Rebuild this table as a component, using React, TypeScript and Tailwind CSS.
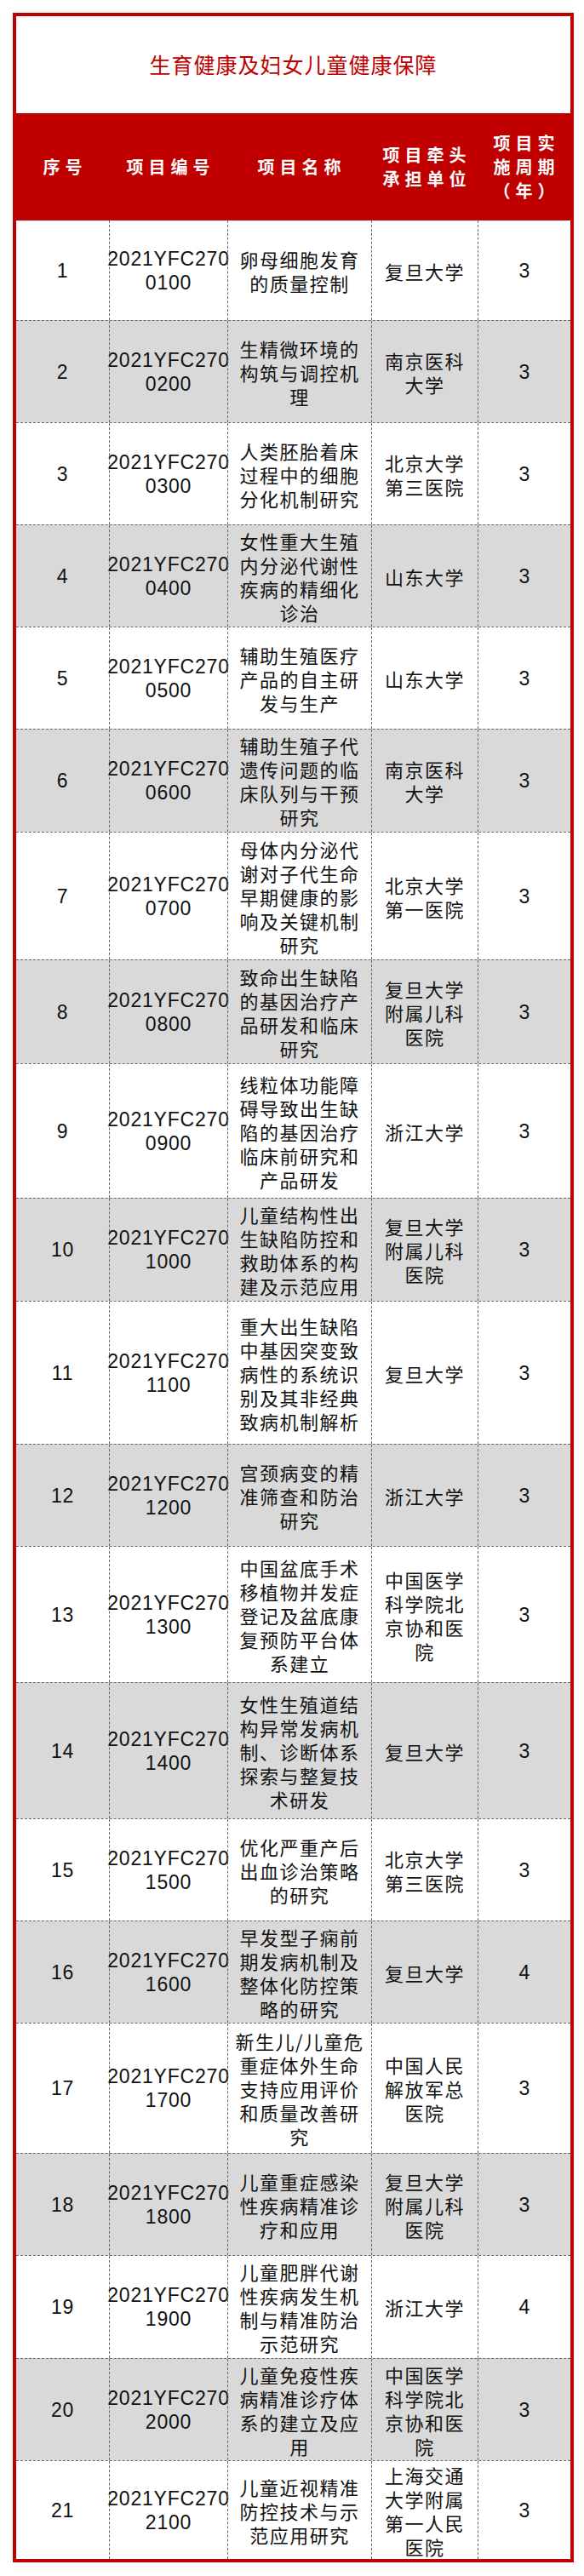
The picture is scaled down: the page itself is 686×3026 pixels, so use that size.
import React from 'react';

interface Project {
  no: number;
  code: string;
  name: string[];
  unit: string[];
  years: number;
  h: string;
}

// 项目数据：名称和单位按原图的换行拆好
const projects: Project[] = [
  { no: 1, code: '0100', name: ['卵母细胞发育', '的质量控制'], unit: ['复旦大学'], years: 3, h: 'h-[117px]' },
  { no: 2, code: '0200', name: ['生精微环境的', '构筑与调控机', '理'], unit: ['南京医科', '大学'], years: 3, h: 'h-[120px]' },
  { no: 3, code: '0300', name: ['人类胚胎着床', '过程中的细胞', '分化机制研究'], unit: ['北京大学', '第三医院'], years: 3, h: 'h-[120px]' },
  { no: 4, code: '0400', name: ['女性重大生殖', '内分泌代谢性', '疾病的精细化', '诊治'], unit: ['山东大学'], years: 3, h: 'h-[120px]' },
  { no: 5, code: '0500', name: ['辅助生殖医疗', '产品的自主研', '发与生产'], unit: ['山东大学'], years: 3, h: 'h-[120px]' },
  { no: 6, code: '0600', name: ['辅助生殖子代', '遗传问题的临', '床队列与干预', '研究'], unit: ['南京医科', '大学'], years: 3, h: 'h-[121px]' },
  { no: 7, code: '0700', name: ['母体内分泌代', '谢对子代生命', '早期健康的影', '响及关键机制', '研究'], unit: ['北京大学', '第一医院'], years: 3, h: 'h-[150px]' },
  { no: 8, code: '0800', name: ['致命出生缺陷', '的基因治疗产', '品研发和临床', '研究'], unit: ['复旦大学', '附属儿科', '医院'], years: 3, h: 'h-[122px]' },
  { no: 9, code: '0900', name: ['线粒体功能障', '碍导致出生缺', '陷的基因治疗', '临床前研究和', '产品研发'], unit: ['浙江大学'], years: 3, h: 'h-[158px]' },
  { no: 10, code: '1000', name: ['儿童结构性出', '生缺陷防控和', '救助体系的构', '建及示范应用'], unit: ['复旦大学', '附属儿科', '医院'], years: 3, h: 'h-[121px]' },
  { no: 11, code: '1100', name: ['重大出生缺陷', '中基因突变致', '病性的系统识', '别及其非经典', '致病机制解析'], unit: ['复旦大学'], years: 3, h: 'h-[168px]' },
  { no: 12, code: '1200', name: ['宫颈病变的精', '准筛查和防治', '研究'], unit: ['浙江大学'], years: 3, h: 'h-[120px]' },
  { no: 13, code: '1300', name: ['中国盆底手术', '移植物并发症', '登记及盆底康', '复预防平台体', '系建立'], unit: ['中国医学', '科学院北', '京协和医', '院'], years: 3, h: 'h-[160px]' },
  { no: 14, code: '1400', name: ['女性生殖道结', '构异常发病机', '制、诊断体系', '探索与整复技', '术研发'], unit: ['复旦大学'], years: 3, h: 'h-[160px]' },
  { no: 15, code: '1500', name: ['优化严重产后', '出血诊治策略', '的研究'], unit: ['北京大学', '第三医院'], years: 3, h: 'h-[120px]' },
  { no: 16, code: '1600', name: ['早发型子痫前', '期发病机制及', '整体化防控策', '略的研究'], unit: ['复旦大学'], years: 4, h: 'h-[120px]' },
  { no: 17, code: '1700', name: ['新生儿/儿童危', '重症体外生命', '支持应用评价', '和质量改善研', '究'], unit: ['中国人民', '解放军总', '医院'], years: 3, h: 'h-[153px]' },
  { no: 18, code: '1800', name: ['儿童重症感染', '性疾病精准诊', '疗和应用'], unit: ['复旦大学', '附属儿科', '医院'], years: 3, h: 'h-[120px]' },
  { no: 19, code: '1900', name: ['儿童肥胖代谢', '性疾病发生机', '制与精准防治', '示范研究'], unit: ['浙江大学'], years: 4, h: 'h-[121px]' },
  { no: 20, code: '2000', name: ['儿童免疫性疾', '病精准诊疗体', '系的建立及应', '用'], unit: ['中国医学', '科学院北', '京协和医', '院'], years: 3, h: 'h-[120px]' },
  { no: 21, code: '2100', name: ['儿童近视精准', '防控技术与示', '范应用研究'], unit: ['上海交通', '大学附属', '第一人民', '医院'], years: 3, h: 'h-[116px]' },
];

const cols = 'grid grid-cols-[109px_139px_169px_125px_109px]';

const Lines = ({ lines }: { lines: string[] }) => (
  <div className="flex flex-col items-center">
    {lines.map((l, i) => (
      <span key={i} className="whitespace-nowrap">{l}</span>
    ))}
  </div>
);

const HeadCell = ({ lines }: { lines: string[] }) => (
  <div className="flex items-center justify-center text-center text-white font-bold text-[20px] leading-[28px] tracking-[6px] pl-[6px]">
    <Lines lines={lines} />
  </div>
);

const App = () => {
  return (
    <div className="bg-white w-[686px] h-[3026px] pt-[15px] font-['Liberation_Sans_Narrow','Liberation_Sans','Noto_Sans_CJK_SC',sans-serif]">
      <div className="ml-[15px] w-[659px] border-4 border-[#c00000]">
        <div className="h-[114px] flex items-center justify-center">
          <h1 className="text-[#c00000] text-[25px] tracking-[1px] font-['Noto_Sans_CJK_SC',sans-serif] font-normal">
            生育健康及妇女儿童健康保障
          </h1>
        </div>

        <div className={`${cols} h-[126px] bg-[#c00000] font-['Noto_Sans_CJK_SC',sans-serif]`}>
          <HeadCell lines={['序号']} />
          <HeadCell lines={['项目编号']} />
          <HeadCell lines={['项目名称']} />
          <HeadCell lines={['项目牵头', '承担单位']} />
          <HeadCell lines={['项目实', '施周期', '（年）']} />
        </div>

        {projects.map((p, idx) => (
          <div
            key={p.no}
            className={`${cols} ${p.h} ${idx > 0 ? 'border-t border-dashed border-[#666]' : ''} ${
              idx % 2 === 1 ? 'bg-[#d9d9d9]' : 'bg-white'
            } text-[#111] leading-[28px]`}
          >
            <div className="flex items-center justify-center text-[23px] tracking-[0.8px]">{p.no}</div>
            <div className="flex items-center justify-center border-l border-dashed border-[#666] text-[23px] tracking-[0.8px]">
              <Lines lines={['2021YFC270', p.code]} />
            </div>
            <div className="flex items-center justify-center border-l border-dashed border-[#666] text-[22px] tracking-[1.5px] font-['Noto_Sans_CJK_SC',sans-serif]">
              <Lines lines={p.name} />
            </div>
            <div className="flex items-center justify-center border-l border-dashed border-[#666] text-[22px] tracking-[1.5px] font-['Noto_Sans_CJK_SC',sans-serif]">
              <Lines lines={p.unit} />
            </div>
            <div className="flex items-center justify-center border-l border-dashed border-[#666] text-[23px]">{p.years}</div>
          </div>
        ))}
      </div>
    </div>
  );
};

export default App;
